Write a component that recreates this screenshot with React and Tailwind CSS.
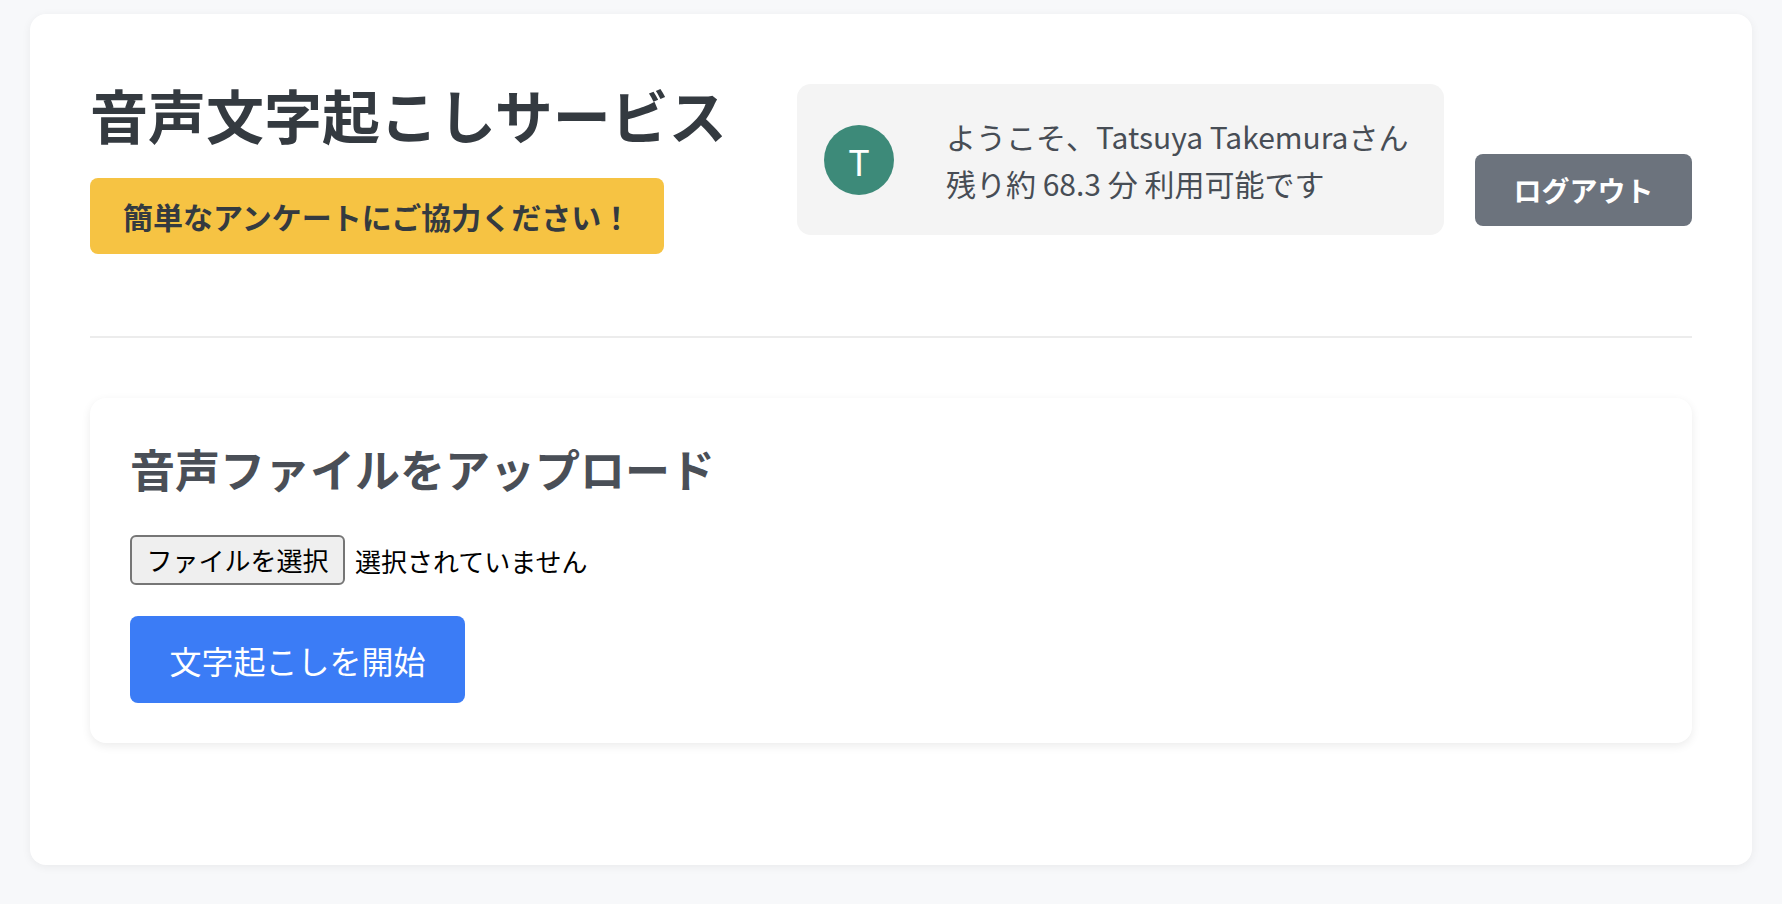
const font = { fontFamily: '"Noto Sans CJK JP", "Noto Sans", sans-serif' };

function Header() {
  return (
    <div className="flex justify-between items-start pb-[82px] border-b-2 border-[#ececec]">
      {/* Title + survey */}
      <div className="flex flex-col items-start">
        <h1 className="text-[58px] leading-[60px] font-bold text-[#343a40]">
          音声文字起こしサービス
        </h1>
        <button className="mt-[34px] h-[76px] px-[33px] rounded-[8px] bg-[#f6c343] text-[30px] leading-[40px] font-bold text-[#343a40]">
          簡単なアンケートにご協力ください！
        </button>
      </div>

      {/* User info + logout */}
      <div className="flex items-start gap-[31px]">
        <div className="flex items-center h-[151px] w-[647px] pl-[27px] pr-[20px] rounded-[14px] bg-[#f4f4f4]">
          <div className="w-[70px] h-[70px] rounded-full bg-[#3d8a79] flex items-center justify-center text-white text-[36px] leading-none">
            T
          </div>
          <div className="ml-[52px] text-[30px] leading-[47px] text-[#474d55]">
            <p>ようこそ、Tatsuya Takemuraさん</p>
            <p>残り約 68.3 分 利用可能です</p>
          </div>
        </div>
        <button className="mt-[70px] h-[72px] w-[217px] rounded-[8px] bg-[#6c737d] text-white text-[28px] font-bold leading-none">
          ログアウト
        </button>
      </div>
    </div>
  );
}

function Upload() {
  return (
    <div className="mt-[60px] rounded-[16px] bg-white shadow-[0_3px_10px_rgba(0,0,0,0.08)] px-[40px] pt-[44px] pb-[40px]">
      <h2 className="text-[45px] leading-[54px] font-bold text-[#4a4f57]">
        音声ファイルをアップロード
      </h2>
      <div className="mt-[39px] flex items-center">
        <button className="h-[50px] w-[215px] rounded-[6px] border-2 border-[#767676] bg-[#efefef] text-[26px] leading-none text-black">
          ファイルを選択
        </button>
        <span className="ml-[10px] text-[26px] text-black">選択されていません</span>
      </div>
      <button className="mt-[31px] h-[87px] w-[335px] rounded-[8px] bg-[#3b7cf6] text-white text-[32px] leading-none">
        文字起こしを開始
      </button>
    </div>
  );
}

export default function App() {
  return (
    <div className="min-h-screen bg-[#f7f8fa] pt-[14px] px-[30px] pb-[40px]" style={font}>
      <div className="bg-white rounded-[16px] shadow-[0_2px_10px_rgba(0,0,0,0.06)] pt-[70px] px-[60px] pb-[122px]">
        <Header />
        <Upload />
      </div>
    </div>
  );
}
